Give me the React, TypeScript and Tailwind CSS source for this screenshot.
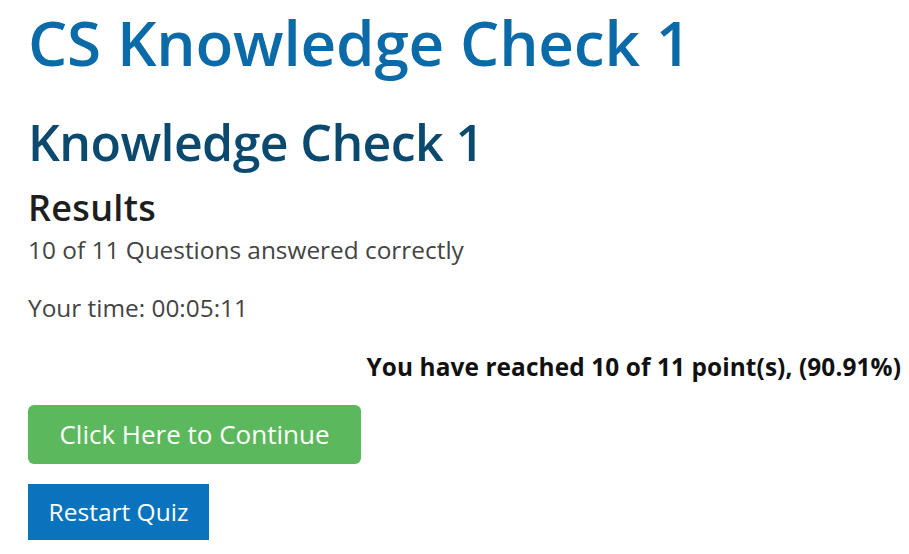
export default function App() {
  return (
    <div className="w-[909px] h-[554px] bg-white overflow-hidden pl-[28px]" style={{ fontFamily: '"Open Sans", "Noto Sans", sans-serif' }}>
      <h1 className="text-[62px] leading-[1] font-semibold text-[#0b6aa8] mt-[11px] tracking-[-0.2px]">CS Knowledge Check 1</h1>
      <h2 className="text-[50px] leading-[1] font-semibold text-[#0b4a6e] mt-[44px] tracking-[-0.6px]">Knowledge Check 1</h2>
      <h3 className="text-[36px] leading-[1] font-semibold text-[#1e1e1e] mt-[23px] tracking-[0.3px]">Results</h3>
      <p className="text-[24.4px] leading-[1] text-[#444] mt-[12px]">10 of 11 Questions answered correctly</p>
      <p className="text-[24.4px] leading-[1] text-[#444] mt-[34px]">Your time: 00:05:11</p>
      <p className="text-[24.4px] leading-[1] font-bold text-[#111] mt-[34px] text-right pr-[8px] tracking-[0.1px]">You have reached 10 of 11 point(s), (90.91%)</p>
      <div className="mt-[26px] flex flex-col items-start gap-[20px]">
        <button className="w-[333px] h-[59px] rounded-[6px] bg-[#5cb85c] text-white text-[26px]">Click Here to Continue</button>
        <button className="w-[181px] h-[56px] bg-[#0a73bd] text-white text-[24.5px]">Restart Quiz</button>
      </div>
    </div>
  );
}
